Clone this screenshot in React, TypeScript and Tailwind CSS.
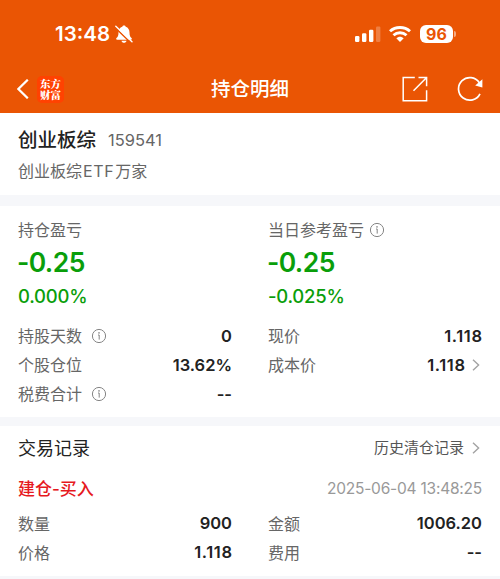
import type { ReactNode } from 'react';

const InfoIcon = ({ className = '' }: { className?: string }) => (
  <svg viewBox="0 0 16 16" fill="none" className={`size-4 shrink-0 text-[#858585] ${className}`}>
    <circle cx="8" cy="8" r="6.6" stroke="currentColor" strokeWidth="1" />
    <circle cx="8" cy="4.9" r="0.8" fill="currentColor" />
    <path d="M7 7H8.2V11.6" stroke="currentColor" strokeWidth="1" />
  </svg>
);

const ChevronRight = () => (
  <svg viewBox="0 0 8 12" fill="none" className="w-2 h-3 shrink-0 mr-[2px]">
    <path d="M1 0.7L6.6 6L1 11.3" stroke="#a3a3a3" strokeWidth="1.4" />
  </svg>
);

const StatusBar = () => (
  <div className="h-[68px] flex justify-between pt-[22px] pl-[55px] pr-[44px]">
    <div className="h-6 flex items-center">
      <span className="w-[56px] pt-[1px] text-[20.5px] font-semibold">13:48</span>
      <svg viewBox="0 0 18 20" className="w-[18px] h-5 ml-[4px]">
        <path
          d="M9 1.6c-.9 0-1.5.5-1.7 1.2C4.8 3.6 3.5 5.8 3.5 8.5c0 3.5-.9 4.4-2 5.6-.7.8-.3 1.7.7 1.7h13.6c1 0 1.4-.9.7-1.7-1.1-1.2-2-2.1-2-5.6 0-2.700-1.300-4.900-3.800-5.700C10.5 2.1 9.9 1.6 9 1.6zM6.5 16.7c.3 1.300 1.300 2.100 2.500 2.100s2.200-.8 2.500-2.100z"
          fill="#fff"
        />
        <path d="M0 3.4L16.2 19.2" stroke="#ea5504" strokeWidth="1.5" />
        <path d="M0.8 2.2L17 17.7" stroke="#fff" strokeWidth="1.4" strokeLinecap="round" />
      </svg>
    </div>
    <div className="h-6 flex items-center">
      <svg viewBox="0 0 26 16" className="w-[26px] h-4" fill="#fff">
        <rect x="0" y="10" width="4.4" height="6" rx="1.2" />
        <rect x="7" y="7.3" width="4.4" height="8.7" rx="1.2" />
        <rect x="14" y="3.8" width="4.4" height="12.2" rx="1.2" />
        <rect x="21" y="0.5" width="4.4" height="15.5" rx="1.2" opacity="0.25" />
      </svg>
      <svg viewBox="0 0 22 16" className="w-[22px] h-4 ml-[8px]" fill="none" stroke="#fff" strokeWidth="2.9">
        <path d="M1 5.3C6.6 0.2 15.4 0.2 21 5.3" />
        <path d="M4.5 9.3C8.2 5.9 13.8 5.9 17.5 9.3" />
        <path d="M7.3 12.3C9.4 10.2 12.6 10.2 14.7 12.3L11 16Z" fill="#fff" stroke="none" />
      </svg>
      <div className="w-[33px] h-[18px] ml-[9px] rounded-[6px] bg-white text-[#ea5504] text-[16px] leading-[18px] font-bold text-center">
        96
      </div>
      <div className="w-[2px] h-[6px] ml-[1px] rounded-r-full bg-white/50" />
    </div>
  </div>
);

const NavBar = () => (
  <div className="h-[42px] flex items-center justify-between pl-[17px] pr-[17px]">
    <div className="w-[81px] flex items-center">
      <svg viewBox="0 0 12 20" fill="none" className="w-3 h-5">
        <path d="M10.8 0.7L1.4 10L10.8 19.3" stroke="#fff" strokeWidth="2.2" />
      </svg>
      <div className="size-[27px] ml-[8px] rounded-[5px] bg-[#ff4201] text-center whitespace-pre-line pt-[2px] font-['Noto_Serif_CJK_SC','Noto_Sans_CJK_SC',serif] text-[10.5px] leading-[11.5px] font-black">
        {'东方\n财富'}
      </div>
    </div>
    <h1 className="pt-[1px] text-[19.5px] font-medium">持仓明细</h1>
    <div className="w-[81px] flex items-center justify-between">
      <svg viewBox="0 0 26 26" fill="none" stroke="#fff" strokeWidth="1.5" className="size-[26px]">
        <path d="M12.8 1.5H1.2V24.8H24.6V14.2" />
        <path d="M16.5 1.5H24.6V10.2M24.4 1.7L11.5 14.8" />
      </svg>
      <svg viewBox="0 0 26 26" fill="none" className="size-[26px]">
        <path d="M23 17.8A11.3 11.3 0 1 1 22.3 6.7" stroke="#fff" strokeWidth="1.7" />
        <path d="M25.4 3.2V11.6L18.2 9.4Z" fill="#fff" />
      </svg>
    </div>
  </div>
);

interface RowProps {
  label: string;
  value: string;
  info?: boolean;
  arrow?: boolean;
}

const Row = ({ label, value, info, arrow }: RowProps) => (
  <div className="h-[29px] flex items-center">
    <span className="text-[#666]">{label}</span>
    {info && <InfoIcon className="ml-[9px]" />}
    <span className={`ml-auto text-[16.5px] font-semibold text-[#222] ${value === '1.118' ? 'tracking-[0.6px] -mr-[0.6px]' : ''}`}>
      {value}
    </span>
    {arrow && <span className="ml-[7px]"><ChevronRight /></span>}
  </div>
);

const Profit = ({ label, amount, percent }: { label: ReactNode; amount: string; percent: string }) => (
  <div>
    <div className="h-6 flex items-center text-[#666]">{label}</div>
    <div className="h-[42px] -ml-px flex items-center text-[26.5px] tracking-[-0.6px] font-semibold text-[#0a9e0a]">{amount}</div>
    <div className="h-[26px] flex items-center text-[18.5px] tracking-[-0.25px] font-[550] text-[#0a9e0a]">{percent}</div>
  </div>
);

const LEFT: RowProps[] = [
  { label: '持股天数', value: '0', info: true },
  { label: '个股仓位', value: '13.62%' },
  { label: '税费合计', value: '--', info: true },
];

const RIGHT: RowProps[] = [
  { label: '现价', value: '1.118' },
  { label: '成本价', value: '1.118', arrow: true },
];

export default function App() {
  return (
    <main className="w-full h-[579px] overflow-hidden bg-[#f6f7fa] text-base font-['Inter','Noto_Sans_CJK_SC',sans-serif]">
      <header className="h-[113px] bg-[#ea5504] text-white">
        <StatusBar />
        <NavBar />
      </header>

      <section className="h-[82px] bg-white px-[18px] pt-[11px]">
        <div className="h-[31px] flex items-center">
          <h2 className="pt-[2px] text-[19.5px] font-medium text-[#222]">创业板综</h2>
          <span className="ml-[12px] pt-[1px] text-[16.5px] text-[#666]">159541</span>
        </div>
        <p className="h-8 flex items-center text-[#666]">
          创业板综<span className="mx-[1px] tracking-[0.6px]">ETF</span>万家
        </p>
      </section>

      <section className="h-[211px] mt-[11px] bg-white px-[18px] pt-3">
        <div className="grid grid-cols-2 gap-x-9">
          <Profit label="持仓盈亏" amount="-0.25" percent="0.000%" />
          <Profit label={<>当日参考盈亏<InfoIcon className="ml-[5px]" /></>} amount="-0.25" percent="-0.025%" />
        </div>
        <div className="grid grid-cols-2 gap-x-9 mt-[11.5px]">
          <div>{LEFT.map(r => <Row key={r.label} {...r} />)}</div>
          <div>{RIGHT.map(r => <Row key={r.label} {...r} />)}</div>
        </div>
      </section>

      <section className="h-[150px] mt-[9px] bg-white px-[18px]">
        <div className="h-11 flex items-center justify-between">
          <h2 className="text-[18px] text-[#222]">交易记录</h2>
          <div className="flex items-center gap-[8px] text-[15px] text-[#555]">
            历史清仓记录
            <ChevronRight />
          </div>
        </div>
        <div className="h-[38px] flex items-center justify-between">
          <span className="pt-[1px] text-[17px] font-medium text-[#e6191e]">建仓-买入</span>
          <span className="text-[15.5px] tracking-[-0.22px] text-[#999]">2025-06-04 13:48:25</span>
        </div>
        <div className="grid grid-cols-2 gap-x-9 mt-px">
          <Row label="数量" value="900" />
          <Row label="金额" value="1006.20" />
          <Row label="价格" value="1.118" />
          <Row label="费用" value="--" />
        </div>
      </section>
    </main>
  );
}
